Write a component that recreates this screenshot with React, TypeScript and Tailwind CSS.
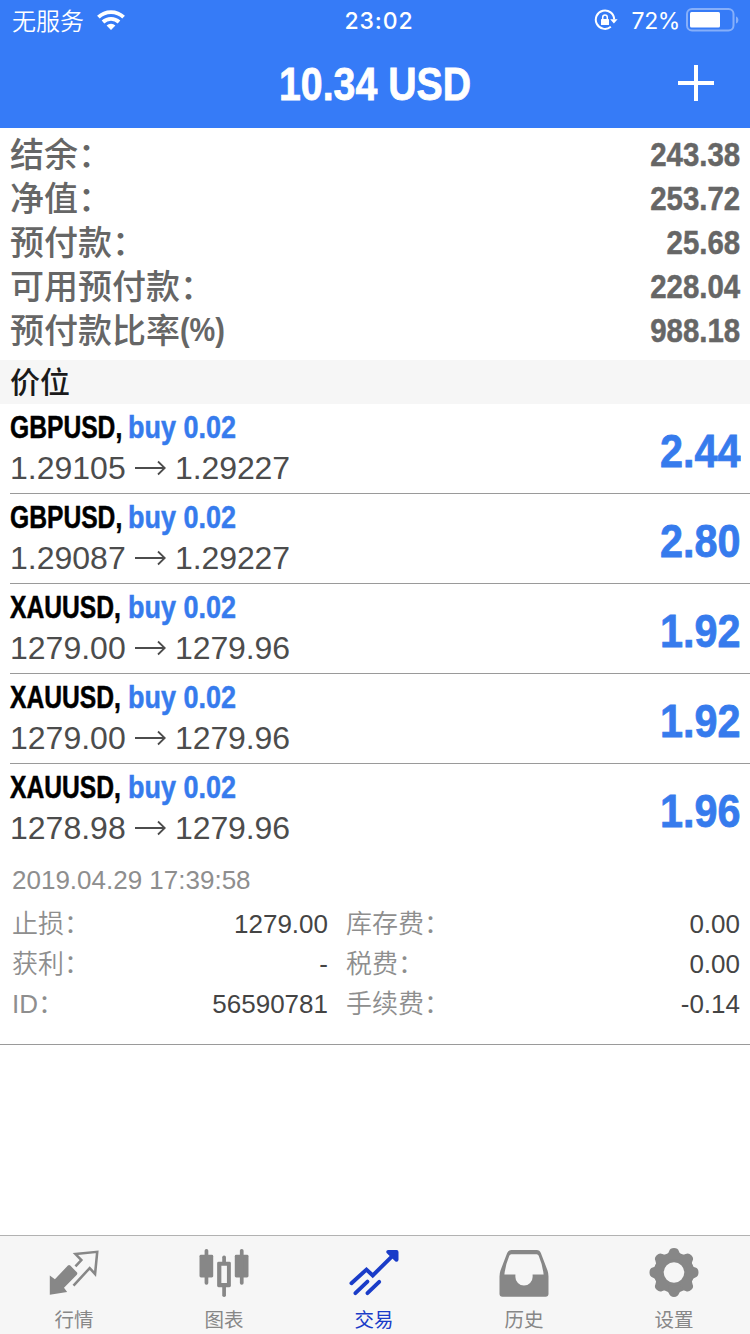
import type { ReactNode } from 'react'
import clsx from 'clsx'

const SUMMARY = [
  { label: '结余：', value: '243.38' },
  { label: '净值：', value: '253.72' },
  { label: '预付款：', value: '25.68' },
  { label: '可用预付款：', value: '228.04' },
  { label: '预付款比率', unit: '(%)', value: '988.18' },
]

const POSITIONS = [
  { symbol: 'GBPUSD', volume: '0.02', open: '1.29105', current: '1.29227', profit: '2.44' },
  { symbol: 'GBPUSD', volume: '0.02', open: '1.29087', current: '1.29227', profit: '2.80' },
  { symbol: 'XAUUSD', volume: '0.02', open: '1279.00', current: '1279.96', profit: '1.92' },
  { symbol: 'XAUUSD', volume: '0.02', open: '1279.00', current: '1279.96', profit: '1.92' },
  { symbol: 'XAUUSD', volume: '0.02', open: '1278.98', current: '1279.96', profit: '1.96' },
]

const DETAILS = [
  ['止损：', '1279.00', '库存费：', '0.00'],
  ['获利：', '-', '税费：', '0.00'],
  ['ID：', '56590781', '手续费：', '-0.14'],
]

function StatusBar() {
  return (
    <div className="flex h-10 items-center justify-between pl-3 pr-[11px] font-[Inter,'Noto_Sans_CJK_SC',sans-serif] text-2xl leading-10">
      <div className="flex w-60 items-center gap-[13px]">
        <span className="mt-[3px] font-[350]">无服务</span>
        <svg width="28" height="20" viewBox="0 0 28 20" fill="none" stroke="currentColor" strokeWidth="3.8">
          <path d="M1.4 7.2a18 18 0 0 1 25.2 0" />
          <path d="M6 12a11.6 11.6 0 0 1 16 0" />
          <path d="M14 20l-4.4-4.5a6.3 6.3 0 0 1 8.8 0z" fill="currentColor" stroke="none" />
        </svg>
      </div>
      <span className="mt-0.5 ml-[7px] text-[23px] font-medium tracking-[0.9px]">23:02</span>
      <div className="flex w-60 items-center justify-end">
        <svg className="mr-[14px]" width="24" height="22" viewBox="0 0 24 22" fill="none" stroke="currentColor" strokeWidth="2">
          <path d="M16.8 17.8A9.2 9.2 0 1 1 20.2 10.5" />
          <path d="M16.2 10.2h7.4l-3.7 4.4z" fill="currentColor" stroke="none" />
          <rect x="7" y="10" width="8" height="6" rx="0.6" fill="currentColor" stroke="none" />
          <path d="M8.7 10.5V8.4a2.3 2.3 0 0 1 4.6 0v2.1" strokeWidth="1.5" />
        </svg>
        <span className="mt-0.5 mr-[6px] text-[23px] tracking-[-0.4px]">72%</span>
        <svg width="53" height="24" viewBox="0 0 53 24">
          <rect x="1" y="1" width="46.5" height="21.5" rx="5" fill="none" stroke="white" strokeOpacity="0.4" strokeWidth="2" />
          <rect x="4" y="4" width="30" height="15.5" rx="1.5" fill="white" />
          <path d="M50 8.5c3.2 1 3.2 6 0 7z" fill="white" fillOpacity="0.4" />
        </svg>
      </div>
    </div>
  )
}

function Header() {
  return (
    <header className="h-32 shrink-0 bg-[#367bf7] text-white">
      <StatusBar />
      <div className="flex h-[88px] items-center justify-between px-9">
        <span className="w-9" />
        <h1 className="w-[230px] scale-x-[0.835] whitespace-nowrap text-center text-[47px] font-bold leading-[90px] [-webkit-text-stroke:0.8px]">
          10.34 USD
        </h1>
        <svg className="-mt-[2px]" width="36" height="36" viewBox="0 0 36 36" stroke="currentColor" strokeWidth="4">
          <path d="M18 0v36M0 18h36" />
        </svg>
      </div>
    </header>
  )
}

function Summary() {
  return (
    <section className="px-2.5 pt-1 pb-2 text-[#666]">
      {SUMMARY.map((row) => (
        <div key={row.label} className="flex h-11 items-center justify-between text-[34px] font-medium leading-[44px]">
          <div className="-mt-0.5 flex">
            <span className="font-['Noto_Sans_CJK_SC',sans-serif]">{row.label}</span>
            {row.unit && <span className="origin-left scale-x-[0.85] font-bold">{row.unit}</span>}
          </div>
          <span className="-mr-px origin-right scale-x-[0.865] pr-px font-bold [-webkit-text-stroke:0.5px]">{row.value}</span>
        </div>
      ))}
    </section>
  )
}

function Position({ item, last }: { item: (typeof POSITIONS)[number]; last: boolean }) {
  return (
    <div className={clsx('ml-2.5 flex h-[90px] items-center justify-between pr-2.5', !last && 'border-b border-[#9a9a9a]')}>
      <div className="-mt-1">
        <div className="flex h-[42px] whitespace-nowrap text-[32px] font-bold leading-[42px] [-webkit-text-stroke:0.5px]">
          <span className="w-[118px] origin-left scale-x-[0.77] text-black">{item.symbol},</span>
          <span className="origin-left scale-x-[0.843] text-[#367bed]">buy {item.volume}</span>
        </div>
        <div className="flex h-10 items-center text-[32px] leading-10 text-[#4c4c4c]">
          <span className="w-[125px]">{item.open}</span>
          <svg className="mr-[9px]" width="31" height="16" viewBox="0 0 31 16" fill="none" stroke="currentColor" strokeWidth="1.8">
            <path d="M0 8h29.5M23 1.5L29.8 8L23 14.5" />
          </svg>
          <span className="tracking-[-0.1px]">{item.current}</span>
        </div>
      </div>
      <span className="mt-[3px] origin-right scale-x-[0.88] text-[47px] font-bold leading-none text-[#367bed] [-webkit-text-stroke:0.8px]">
        {item.profit}
      </span>
    </div>
  )
}

function Details() {
  return (
    <div className="h-[191px] border-b border-[#9a9a9a] pl-3 pr-2.5 pt-[5px] text-[26px] text-[#8e8e8e]">
      <div className="h-[45px] leading-[42px]">2019.04.29 17:39:58</div>
      {DETAILS.map(([label, value, feeLabel, fee]) => (
        <div key={label} className="flex h-10 items-center leading-10">
          <div className="flex w-[316px] justify-between">
            <span className="font-[350]">{label}</span>
            <span className="text-[#444]">{value}</span>
          </div>
          <div className="ml-[18px] flex flex-1 justify-between">
            <span className="font-[350]">{feeLabel}</span>
            <span className="text-[#444]">{fee}</span>
          </div>
        </div>
      ))}
    </div>
  )
}

function QuotesIcon() {
  return (
    <>
      <path d="M26.5 18.8L32.5 12.3L26.5 6.2L48.700 3.900L46.500 26.500L41 20.500L24.500 38.500" fill="none" stroke="currentColor" strokeWidth="2.6" />
      <path d="M18.8 17.8q1.2-1.1 2.4 0l6.7 7q1 1.2 0 2.4L14.8 40.5L18 45L.3 47.8V28l5.2 4z" />
    </>
  )
}

function ChartIcon() {
  return (
    <>
      <rect x="0" y="7" width="14" height="23" rx="1.5" />
      <rect x="5.2" y="1" width="3.8" height="36.5" rx="1.8" />
      <path fillRule="evenodd" d="M19.5 14h11q1.5 0 1.5 1.5v23q0 1.5-1.5 1.5h-11q-1.5 0-1.5-1.5v-23q0-1.5 1.5-1.5zM22.3 18v17.7H28V18z" />
      <rect x="23.2" y="7.7" width="3.8" height="8" rx="1.8" />
      <rect x="23.2" y="38" width="3.8" height="12" rx="1.8" />
      <rect x="36" y="7" width="14" height="23" rx="1.5" />
      <rect x="41.2" y="1" width="3.8" height="36.5" rx="1.8" />
    </>
  )
}

function TradeIcon() {
  return (
    <g fill="none" stroke="currentColor" strokeWidth="4" strokeLinecap="round" strokeLinejoin="round">
      <path d="M2 36L17.3 22L23.7 28L46.5 5.5" strokeLinejoin="miter" />
      <path d="M39.5 4H48V12z" fill="currentColor" />
      <path d="M6 46L18.3 34.3M18.3 46L30.3 34.5" />
    </g>
  )
}

function HistoryIcon() {
  return (
    <path
      fillRule="evenodd"
      d="M12 2h26q3 0 4.2 3.2L49 23q1 3 1 6v17.7q0 3-3 3H3q-3 0-3-3V29q0-3 1-6L7.8 5.2Q9 2 12 2zM12 6.3q-1.4 0-2 1.7Q6 17.5 5 27h11.2v2.5a8.8 8.8 0 0 0 17.6 0V27H45q-1-9.5-5-19q-.6-1.7-2-1.7z"
    />
  )
}

function SettingsIcon() {
  return (
    <>
      <circle cx="25" cy="25" r="15.5" fill="none" stroke="currentColor" strokeWidth="10" />
      {[0, 45, 90, 135, 180, 225, 270, 315].map((angle) => (
        <path key={angle} d="M15 8Q19 6.5 20 3.2Q21 0 25 0T30 3.2Q31 6.5 35 8L30 12H20z" transform={`rotate(${angle} 25 25)`} />
      ))}
    </>
  )
}

const TABS: { label: string; icon: ReactNode; active?: boolean }[] = [
  { label: '行情', icon: <QuotesIcon /> },
  { label: '图表', icon: <ChartIcon /> },
  { label: '交易', icon: <TradeIcon />, active: true },
  { label: '历史', icon: <HistoryIcon /> },
  { label: '设置', icon: <SettingsIcon /> },
]

function TabBar() {
  return (
    <nav className="mt-auto flex h-[99px] shrink-0 border-t border-[#b2b2b2] bg-[#f6f6f6]">
      {TABS.map((tab) => (
        <div
          key={tab.label}
          className={clsx('flex w-[150px] shrink-0 flex-col items-center pt-3 pr-0.5', tab.active ? 'text-[#1a3cc8]' : 'text-[#878787]')}
        >
          <svg width="50" height="50" viewBox="0 0 50 50" fill="currentColor">
            {tab.icon}
          </svg>
          <span className="mt-[9px] text-[19.5px] leading-7">{tab.label}</span>
        </div>
      ))}
    </nav>
  )
}

export default function App() {
  return (
    <div className="flex h-[1334px] w-[750px] flex-col overflow-hidden bg-white font-['Liberation_Sans','Noto_Sans_CJK_SC',sans-serif]">
      <Header />
      <Summary />
      <div className="h-11 bg-[#f6f6f6] px-2.5 text-[30px] font-medium leading-[46px] text-[#1a1a1a]">价位</div>
      <main>
        {POSITIONS.map((item, i) => (
          <Position key={i} item={item} last={i === POSITIONS.length - 1} />
        ))}
        <Details />
      </main>
      <TabBar />
    </div>
  )
}
